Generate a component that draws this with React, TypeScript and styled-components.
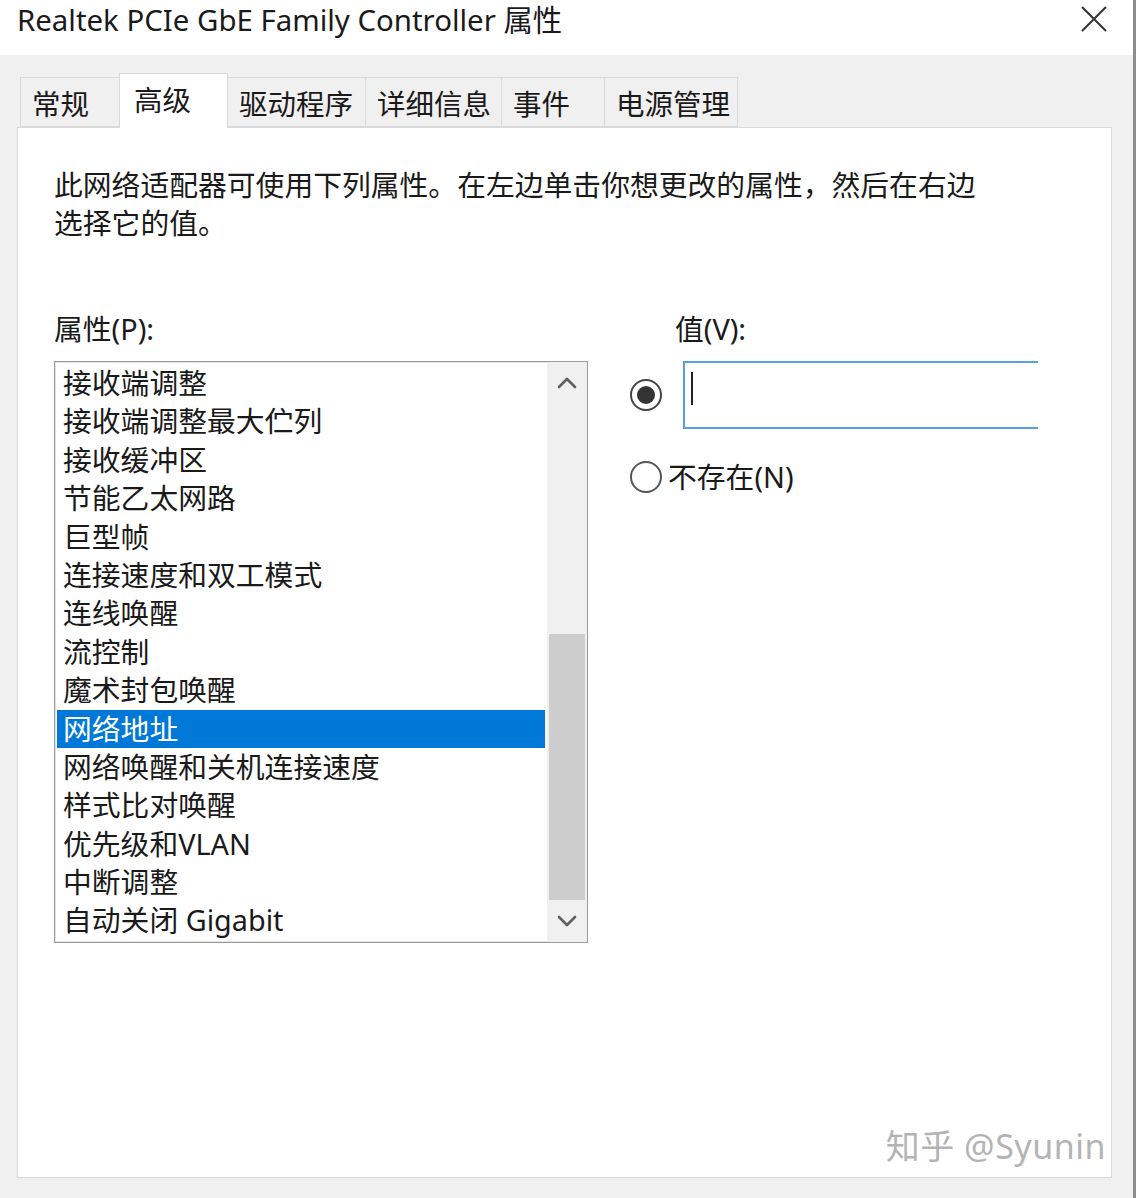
import React from 'react';
import styled, { createGlobalStyle } from 'styled-components';

const GlobalStyle = createGlobalStyle`
  html, body {
    margin: 0;
    padding: 0;
    background: #f0f0f0;
  }
  body {
    font-family: "Noto Sans", "Noto Sans CJK SC", sans-serif;
    color: #1a1a1a;
  }
  * {
    box-sizing: border-box;
  }
`;

const UI_FONT = `"Noto Sans", "Noto Sans CJK SC", sans-serif`;

const Window = styled.div`
  width: 1136px;
  height: 1198px;
  display: flex;
  flex-direction: column;
  background: #f0f0f0;
  border-right: 3px solid #8c8c8c;
  font-family: ${UI_FONT};
  overflow: hidden;
`;

const TitleBar = styled.div`
  height: 55px;
  flex: none;
  display: flex;
  align-items: flex-start;
  justify-content: space-between;
  background: #fff;
  padding: 0 25px 0 17px;
`;

const Title = styled.div`
  font-size: 29.4px;
  line-height: 40px;
  color: #1a1a1a;
  white-space: nowrap;
`;

const CloseButton = styled.button`
  width: 28px;
  height: 28px;
  margin-top: 5px;
  padding: 0;
  border: 0;
  background: transparent;
  display: flex;
  align-items: center;
  justify-content: center;
  color: #333;
`;

const Body = styled.div`
  flex: 1;
  display: flex;
  flex-direction: column;
  padding: 22px 21px 20px 17px;
  min-height: 0;
`;

const TabStrip = styled.div`
  display: flex;
  align-items: flex-end;
  padding-left: 3px;
  height: 50px;
  flex: none;
  position: relative;
  z-index: 1;
`;

const Tab = styled.div<{ $width: number; $active?: boolean }>`
  width: ${p => p.$width}px;
  height: ${p => (p.$active ? 55 : 50)}px;
  margin-bottom: ${p => (p.$active ? -1 : 0)}px;
  margin-left: -1px;
  display: flex;
  align-items: center;
  padding-left: ${p => (p.$active ? 14 : 11)}px;
  padding-bottom: ${p => (p.$active ? 5 : 0)}px;
  background: ${p => (p.$active ? '#fff' : '#f0f0f0')};
  border: 1px solid #d9d9d9;
  border-bottom: ${p => (p.$active ? 'none' : '1px solid #d9d9d9')};
  font-size: 28.5px;
  color: #1a1a1a;
  white-space: nowrap;

  &:first-child {
    margin-left: 0;
  }
`;

const Panel = styled.div`
  flex: 1;
  position: relative;
  background: #fff;
  border: 1px solid #d9d9d9;
  padding: 38px 36px 0 36px;
`;

const Description = styled.p`
  margin: 0;
  width: 940px;
  font-size: 28.8px;
  line-height: 38px;
  color: #1a1a1a;
`;

const FormRow = styled.div`
  display: flex;
  margin-top: 68px;
`;

const PropertyColumn = styled.div`
  width: 534px;
  flex: none;
  display: flex;
  flex-direction: column;
`;

const FieldLabel = styled.div<{ $indent?: number }>`
  font-size: 28.8px;
  line-height: 38px;
  height: 38px;
  padding-left: ${p => p.$indent ?? 0}px;
  color: #1a1a1a;
`;

const ListBox = styled.div`
  margin-top: 13px;
  height: 582px;
  display: flex;
  border: 1px solid #9a9a9a;
  box-shadow: inset 0 0 0 1px #e3e3e3;
  background: #fff;
`;

const ListItems = styled.ul`
  flex: 1;
  list-style: none;
  margin: 0;
  padding: 2px 2px 0 2px;
  overflow: hidden;
`;

const ListRow = styled.li<{ $selected?: boolean }>`
  height: 38.4px;
  line-height: 38.4px;
  padding-left: 6px;
  font-size: 28.8px;
  white-space: nowrap;
  color: ${p => (p.$selected ? '#fff' : '#1a1a1a')};
  background: ${p => (p.$selected ? '#0078d7' : 'transparent')};
`;

const ScrollBar = styled.div`
  width: 40px;
  flex: none;
  display: flex;
  flex-direction: column;
  background: #f0f0f0;
`;

const ScrollButton = styled.div`
  height: 42px;
  flex: none;
  display: flex;
  align-items: center;
  justify-content: center;
  color: #606060;
`;

const ScrollTrack = styled.div`
  flex: 1;
  display: flex;
  flex-direction: column;
  justify-content: flex-end;
  padding: 0 2px;
`;

const ScrollThumb = styled.div`
  background: #cdcdcd;
  width: 100%;
`;

const ValueColumn = styled.div`
  margin-left: 42px;
  display: flex;
  flex-direction: column;
`;

const ValueRow = styled.div`
  margin-top: 13px;
  display: flex;
  align-items: center;
  gap: 21px;
`;

const RadioCircle = styled.span<{ $checked?: boolean }>`
  width: 32px;
  height: 32px;
  flex: none;
  border-radius: 50%;
  border: 2px solid ${p => (p.$checked ? '#444' : '#555')};
  background: #fff;
  display: flex;
  align-items: center;
  justify-content: center;

  &::after {
    content: '';
    display: ${p => (p.$checked ? 'block' : 'none')};
    width: 18px;
    height: 18px;
    border-radius: 50%;
    background: #333;
  }
`;

const ValueInput = styled.div`
  width: 355px;
  height: 68px;
  border: 2px solid #5a9fd9;
  border-right: none;
  padding: 9px 0 0 6px;
  background: #fff;
`;

const Caret = styled.span`
  display: block;
  width: 2px;
  height: 33px;
  background: #222;
`;

const OptionRow = styled.label`
  margin-top: 29px;
  display: flex;
  align-items: center;
  gap: 6px;
  font-size: 28.8px;
  line-height: 38px;
  color: #1a1a1a;
`;

const Watermark = styled.div`
  position: absolute;
  right: 5px;
  bottom: 11px;
  font-size: 34px;
  line-height: 40px;
  color: #b4b4b4;
  letter-spacing: 0.5px;
  text-shadow: 0 0 1px #fff;
  pointer-events: none;
`;

const Chevron = ({ up }: { up?: boolean }) => (
  <svg width="20" height="12" viewBox="0 0 20 12" fill="none">
    <path
      d={up ? 'M2 10 L10 2 L18 10' : 'M2 2 L10 10 L18 2'}
      stroke="currentColor"
      strokeWidth="2.6"
      strokeLinecap="round"
      strokeLinejoin="round"
    />
  </svg>
);

const tabs = [
  { label: '常规', width: 100 },
  { label: '高级', width: 109, active: true },
  { label: '驱动程序', width: 139 },
  { label: '详细信息', width: 137 },
  { label: '事件', width: 104 },
  { label: '电源管理', width: 134 },
];

const properties = [
  '接收端调整',
  '接收端调整最大伫列',
  '接收缓冲区',
  '节能乙太网路',
  '巨型帧',
  '连接速度和双工模式',
  '连线唤醒',
  '流控制',
  '魔术封包唤醒',
  '网络地址',
  '网络唤醒和关机连接速度',
  '样式比对唤醒',
  '优先级和VLAN',
  '中断调整',
  '自动关闭 Gigabit',
];

const TOTAL_PROPERTIES = 28;
const selected = '网络地址';

export default function App() {
  const thumbRatio = properties.length / TOTAL_PROPERTIES;

  return (
    <>
      <GlobalStyle />
      <Window>
        <TitleBar>
          <Title>Realtek PCIe GbE Family Controller 属性</Title>
          <CloseButton aria-label="关闭">
            <svg width="26" height="26" viewBox="0 0 26 26">
              <path d="M1 1 L25 25 M25 1 L1 25" stroke="currentColor" strokeWidth="2" />
            </svg>
          </CloseButton>
        </TitleBar>
        <Body>
          <TabStrip>
            {tabs.map(t => (
              <Tab key={t.label} $width={t.width} $active={t.active}>
                {t.label}
              </Tab>
            ))}
          </TabStrip>
          <Panel>
            <Description>
              此网络适配器可使用下列属性。在左边单击你想更改的属性，然后在右边选择它的值。
            </Description>
            <FormRow>
              <PropertyColumn>
                <FieldLabel>属性(P):</FieldLabel>
                <ListBox>
                  <ListItems>
                    {properties.map(p => (
                      <ListRow key={p} $selected={p === selected}>
                        {p}
                      </ListRow>
                    ))}
                  </ListItems>
                  <ScrollBar>
                    <ScrollButton>
                      <Chevron up />
                    </ScrollButton>
                    <ScrollTrack>
                      <ScrollThumb style={{ height: `${thumbRatio * 100}%` }} />
                    </ScrollTrack>
                    <ScrollButton>
                      <Chevron />
                    </ScrollButton>
                  </ScrollBar>
                </ListBox>
              </PropertyColumn>
              <ValueColumn>
                <FieldLabel $indent={45}>值(V):</FieldLabel>
                <ValueRow>
                  <RadioCircle $checked />
                  <ValueInput>
                    <Caret />
                  </ValueInput>
                </ValueRow>
                <OptionRow>
                  <RadioCircle />
                  不存在(N)
                </OptionRow>
              </ValueColumn>
            </FormRow>
            <Watermark>知乎 @Syunin</Watermark>
          </Panel>
        </Body>
      </Window>
    </>
  );
}
